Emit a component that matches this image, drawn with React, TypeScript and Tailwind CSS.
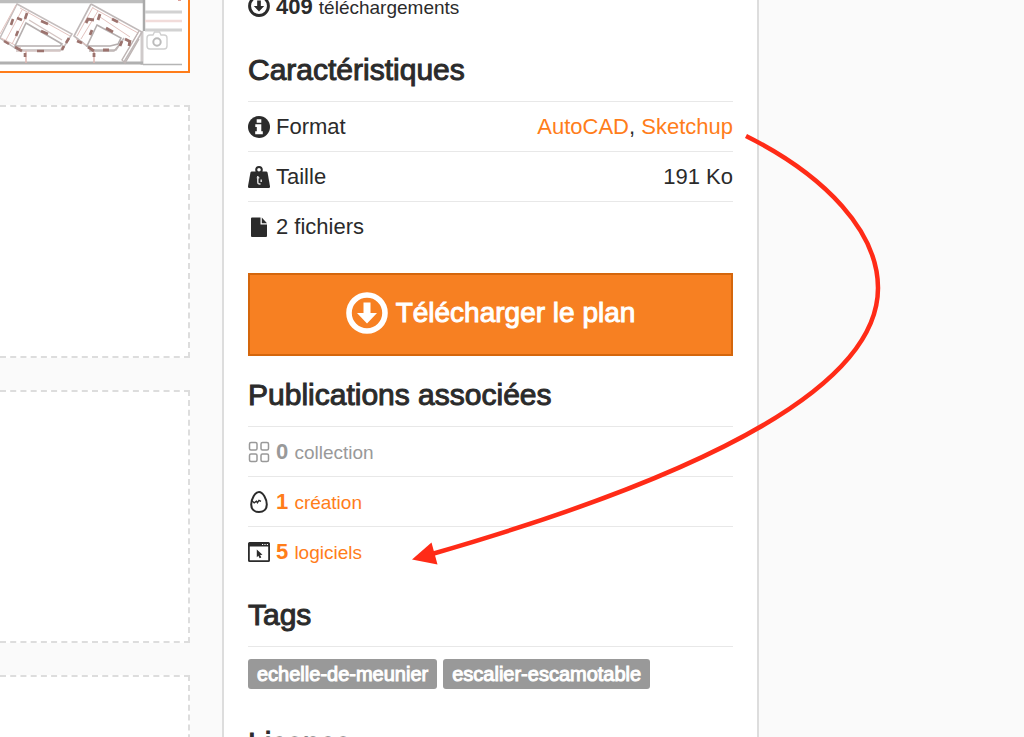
import type { ReactNode } from 'react'

const iconClass = 'size-[22px] shrink-0'

function DownloadIcon({ className }: { className: string }) {
  return (
    <svg viewBox="0 0 42 42" className={className} aria-hidden="true">
      <circle cx="21" cy="21" r="18" fill="none" stroke="currentColor" strokeWidth="5.600" />
      <path d="M17.500 10.500h7v10.500h6.500L21 31.500 11 21h6.500z" fill="currentColor" />
    </svg>
  )
}

function InfoIcon() {
  return (
    <svg viewBox="0 0 22 22" className={iconClass} aria-hidden="true">
      <circle cx="11" cy="11" r="11" fill="currentColor" />
      <path d="M8.700 3.300h4.600v3.500H8.700zM7.300 8.300h6v7h1.500v2.900H7.200v-2.900h1.600v-4.200H7.300z" fill="#fff" />
    </svg>
  )
}

function WeightIcon() {
  return (
    <svg viewBox="0 0 22 22" className={iconClass} aria-hidden="true">
      <path d="M4.300 5.500h13.400c1 0 1.700.5 1.900 1.300L22 20.300c.1 1-.5 1.700-1.500 1.700h-19C.5 22-.1 21.300 0 20.300L2.400 6.800c.2-.8.900-1.300 1.900-1.300z" fill="currentColor" />
      <circle cx="11" cy="3.800" r="2.800" fill="#fff" stroke="currentColor" strokeWidth="2" />
      <path d="M9.800 10v6q0 2.500 2.700 1.800M8.800 11.800h2.500M13.200 13.500v2.500" fill="none" stroke="#ddd" strokeWidth="1.500" />
    </svg>
  )
}

function FileIcon() {
  return (
    <svg viewBox="0 0 22 22" className={iconClass} aria-hidden="true">
      <path d="M4 1.500h8.500v7H19V20q0 1-1 1H4q-1 0-1-1V2.500q0-1 1-1z" fill="currentColor" />
      <path d="M13.800 1.500v5.700H19z" fill="currentColor" />
    </svg>
  )
}

function GridIcon() {
  return (
    <svg viewBox="0 0 22 22" className={iconClass} fill="none" stroke="currentColor" strokeWidth="1.500" aria-hidden="true">
      <rect x="1.500" y="1.500" width="7.500" height="7.500" rx="1.500" />
      <rect x="13" y="1.500" width="7.500" height="7.500" rx="1.500" />
      <rect x="1.500" y="13" width="7.500" height="7.500" rx="1.500" />
      <rect x="13" y="13" width="7.500" height="7.500" rx="1.500" />
    </svg>
  )
}

function EggIcon() {
  return (
    <svg viewBox="0 0 22 22" className={iconClass} fill="none" stroke="currentColor" aria-hidden="true">
      <path d="M11 1C7 1 3.200 8 3.200 13.500 3.200 18.300 6.500 21 11 21s7.800-2.700 7.800-7.500C18.800 8 15 1 11 1z" strokeWidth="2" />
      <path d="M3.500 9.500l2.700 2.300 2.200-1.600 1 1.500 1.600-2.400 2 1" strokeWidth="1.400" />
    </svg>
  )
}

function WindowIcon() {
  return (
    <svg viewBox="0 0 22 22" className={iconClass} aria-hidden="true">
      <rect x=".9" y="1.800" width="20.200" height="18.400" rx=".8" fill="none" stroke="currentColor" strokeWidth="1.800" />
      <path d="M1 1.500h20v4H1z" fill="currentColor" />
      <path d="M14 3.500h1.200M16.400 3.500h1.200M18.800 3.500H20" stroke="#fff" strokeWidth="1" />
      <path d="M8.800 8.500l5.700 5.300-2.400.1 1.200 2.600-1.700.8-1.200-2.600-1.600 1.500z" fill="currentColor" />
    </svg>
  )
}

const mediumText = '[-webkit-text-stroke:1px_currentColor]'

function Heading({ children }: { children: ReactNode }) {
  return <h2 className={`mt-[21px] mb-[13px] text-[30px] leading-9 font-normal whitespace-nowrap ${mediumText}`}>{children}</h2>
}

function Row({ icon, children, value }: { icon: ReactNode; children: ReactNode; value?: ReactNode }) {
  return (
    <li className="flex h-[50px] items-center gap-1.5 border-t border-[#e8e8e8]">
      {icon}
      <span className="whitespace-nowrap">{children}</span>
      {value && <span className="ml-auto whitespace-nowrap">{value}</span>}
    </li>
  )
}

function Count({ n, label }: { n: number; label: string }) {
  return (
    <>
      <b>{n}</b> <span className="text-[19px]">{label}</span>
    </>
  )
}

function PlanDrawing() {
  return (
    <svg width="186" height="71" viewBox="0 0 186 71" className="block" fill="none" aria-hidden="true">
      <path d="M0 1.500h144" stroke="#bdbdbd" strokeWidth="3.500" />
      <path d="M144 0v31" stroke="#aaa" strokeWidth="2.500" />
      <path d="M142 31v34" stroke="#cfcaca" strokeWidth="3" />
      <path d="M0 63h143" stroke="#b0b0b0" strokeWidth="3" />
      <path d="M143 64.500h39" stroke="#b5b5b5" strokeWidth="1.500" />
      <path d="M145 12h37M145 30h37" stroke="#d2d2d2" strokeWidth="3" />
      <path d="M145 21h37" stroke="#f2dcda" strokeWidth="2.500" />
      <path d="M178 0h3" stroke="#dda09a" strokeWidth="2" />
      <g>
        <path d="M17 4L72 34 62 50 18 50 0 38z" fill="#fff" stroke="#c4bdbd" strokeWidth="1.500" />
        <path d="M0 34L16 5M6 40L22 10M20 8l50 28M1 38l20 10M12 44L29 11" stroke="#e3c3bf" />
        <path d="M26 23l36 21-2 2H15z" fill="#fff" stroke="#b5afaf" strokeWidth="1.600" />
        <path d="M29 20l33 20M16 51h44l3-6" stroke="#d3c4c2" strokeWidth="1.400" />
        <path d="M26 51v12" stroke="#dfb6b1" strokeWidth="1.500" />
        <path d="M17 18l5 2M27 13l-2 6M13 19l-2 6M41 21l7 3M41 31l7 3M18 31l-2 5M4 41l5 3M15 47l7 4M37 51h7M25 53v4M69 38l-3 5M64 46l-2 4" stroke="#9c736e" strokeWidth="2.600" />
      </g>
      <g>
        <path d="M91 4l51 28-18 30M91 4L74 36l18 14h24l8-12" stroke="#c0b9b9" strokeWidth="1.600" />
        <path d="M93 8l45 25-10 17M77 36L93 7M81 39L98 11M76 39l17 10M100 17l30 20" stroke="#e3c3bf" />
        <path d="M97 25l24 13-3 6-8 2H87z" fill="#fff" stroke="#b5afaf" strokeWidth="1.600" />
        <path d="M89 51h25l6-7M139 31l-17 29 3 3 14-24" stroke="#bdb4b3" strokeWidth="1.400" />
        <path d="M94 51v12" stroke="#dfb6b1" strokeWidth="1.500" />
        <path d="M86 23l2-4 6 1M100 14l-2 6M112 19l6 3M106 28l7 4M92 30l-2 5M77 41l5 2M88 47l6 4M103 50h6M94 53v4M122 41l-2 5M125 39l6 3M130 40l-1 6" stroke="#9c736e" strokeWidth="2.800" />
      </g>
    </svg>
  )
}

function CameraIcon() {
  return (
    <svg viewBox="0 0 22 20" className="absolute right-5 bottom-5 h-5 w-[22px]" fill="#fff" stroke="#d0d0d0" strokeWidth="1.400" aria-hidden="true">
      <path d="M4 4h3l1.500-3h5L15 4h3q3 0 3 3v8q0 3-3 3H4q-3 0-3-3V7q0-3 3-3z" />
      <circle cx="11" cy="11" r="3.700" stroke="#bbb" strokeWidth="2" />
    </svg>
  )
}

export default function App() {
  return (
    <main className="relative flex h-screen overflow-hidden bg-[#fafafa] font-['Liberation_Sans',Arial,sans-serif] text-[22px] text-[#2b2b2b]">
      <aside className="flex w-[190px] shrink-0 flex-col gap-8">
        <a href="#plan" aria-label="Plan" className="relative block border-r-2 border-b-2 border-[#ff7d1a] bg-white">
          <PlanDrawing />
          <CameraIcon />
        </a>
        <div className="h-[253px] shrink-0 border-2 border-l-0 border-dashed border-[#ddd] bg-white" />
        <div className="h-[253px] shrink-0 border-2 border-l-0 border-dashed border-[#ddd] bg-white" />
        <div className="h-[253px] shrink-0 border-2 border-l-0 border-dashed border-[#ddd] bg-white" />
      </aside>

      <section className="ml-8 max-w-[537px] flex-1 self-start border-x-2 border-[#ddd] bg-white px-6 pb-6">
        <p className="-mt-[19px] flex h-[50px] items-center gap-1.5">
          <DownloadIcon className={iconClass} />
          <span>
            <Count n={409} label="téléchargements" />
          </span>
        </p>

        <Heading>Caractéristiques</Heading>
        <ul>
          <Row
            icon={<InfoIcon />}
            value={
              <>
                <a href="#autocad" className="text-[#ff7d1a]">AutoCAD</a>,{' '}
                <a href="#sketchup" className="text-[#ff7d1a]">Sketchup</a>
              </>
            }
          >
            Format
          </Row>
          <Row icon={<WeightIcon />} value="191 Ko">Taille</Row>
          <Row icon={<FileIcon />}>2 fichiers</Row>
        </ul>

        <button type="button" className={`mt-[22px] flex h-[83px] w-full items-center justify-center gap-2 border-2 border-[#d4660c] bg-[#f78022] pb-1 text-[28px] text-white ${mediumText}`}>
          <DownloadIcon className="size-[42px]" />
          <span className="whitespace-nowrap">Télécharger le plan</span>
        </button>

        <Heading>Publications associées</Heading>
        <ul>
          <Row icon={<span className="text-[#999]"><GridIcon /></span>}>
            <span className="text-[#999]"><Count n={0} label="collection" /></span>
          </Row>
          <Row icon={<EggIcon />}>
            <a href="#creations" className="text-[#ff7d1a]"><Count n={1} label="création" /></a>
          </Row>
          <Row icon={<WindowIcon />}>
            <a href="#logiciels" className="text-[#ff7d1a]"><Count n={5} label="logiciels" /></a>
          </Row>
        </ul>

        <Heading>Tags</Heading>
        <div className={`flex flex-wrap gap-1.5 border-t border-[#e8e8e8] pt-3 text-xl leading-[30px] text-white ${mediumText}`}>
          <a href="#echelle-de-meunier" className="rounded-[3px] bg-[#999] px-[9px]">echelle-de-meunier</a>
          <a href="#escalier-escamotable" className="rounded-[3px] bg-[#999] px-[9px]">escalier-escamotable</a>
        </div>

        <div className="mt-9">
          <Heading>Licence</Heading>
        </div>
      </section>

      <svg width="480" height="440" viewBox="405 130 480 440" className="pointer-events-none absolute top-[130px] left-[405px]" aria-hidden="true">
        <path d="M746 136C826 176 878 232 878 288 878 384 716 472 432 554" fill="none" stroke="#ff2b17" strokeWidth="4.500" />
        <path d="M412 559.500L431.500 542.500 437.500 564.500z" fill="#ff2b17" />
      </svg>
    </main>
  )
}
